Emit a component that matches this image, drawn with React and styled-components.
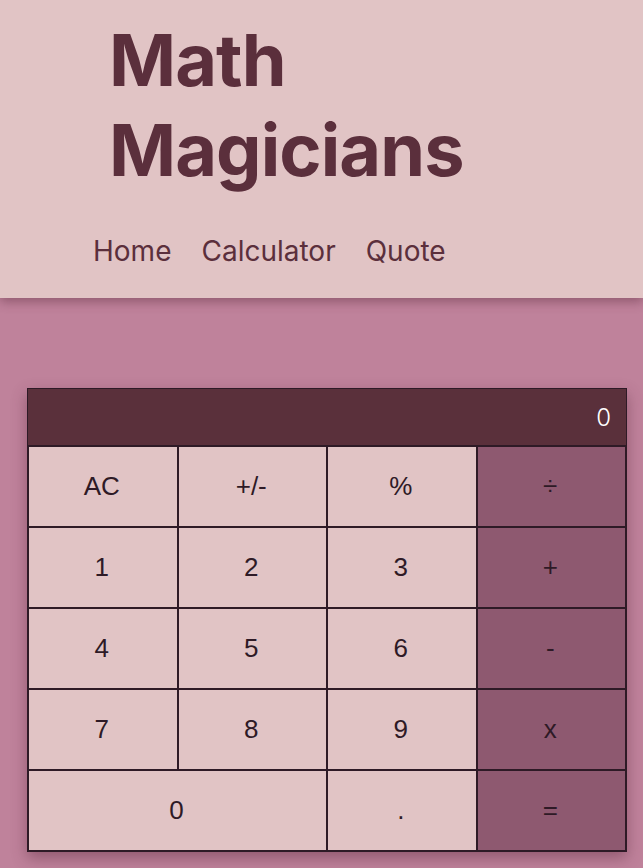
import React from 'react';
import styled, { createGlobalStyle } from 'styled-components';

const Global = createGlobalStyle`
  html, body { margin: 0; padding: 0; background: #bf829b; }
  body { font-family: Inter, "Noto Sans", sans-serif; }
  * { box-sizing: border-box; }
`;

const Page = styled.div`
  display: flex;
  flex-direction: column;
  min-height: 868px;
`;

const Header = styled.header`
  background: #e1c4c5;
  height: 298px;
  padding: 15px 0 0 93px;
  box-shadow: 0 4px 10px rgba(90, 40, 60, 0.45);
  position: relative;
  z-index: 1;
`;

const Title = styled.h1`
  margin: 0 0 0 16px;
  font-family: Inter, sans-serif;
  font-weight: 700;
  font-size: 72px;
  line-height: 90px;
  color: #5b2f3c;
  letter-spacing: -0.9px;
`;

const Nav = styled.nav`
  display: flex;
  gap: 30px;
  margin-top: 39px;
`;

const NavLink = styled.a`
  font-family: Inter, sans-serif;
  font-size: 28px;
  color: #5b2f3c;
  text-decoration: none;
`;

const Main = styled.main`
  padding: 90px 16px 0 27px;
`;

const Calc = styled.div`
  width: 600px;
  display: grid;
  grid-template-columns: repeat(4, 1fr);
  grid-template-rows: 57px repeat(5, 81px);
  box-shadow: 0 6px 14px rgba(90, 40, 60, 0.45);
  border: 1px solid #2e1a26;
`;

const Display = styled.div`
  grid-column: 1 / -1;
  background: #5a303b;
  color: #fff;
  font-family: Inter, sans-serif;
  font-weight: 300;
  font-size: 24px;
  display: flex;
  align-items: center;
  justify-content: flex-end;
  padding-right: 15px;
  border-bottom: 1px solid #2e1a26;
`;

const Key = styled.button`
  grid-column: span ${p => p.span || 1};
  background: ${p => (p.op ? '#8e5970' : '#e1c4c5')};
  border: 1px solid #2e1a26;
  margin: 0;
  font-family: "Liberation Sans", Arial, sans-serif;
  font-size: 26px;
  color: #2e1a26;
  display: flex;
  align-items: center;
  justify-content: center;
  padding: 0 2px 0 0;
  cursor: pointer;
`;

const keys = [
  ['AC'], ['+/-'], ['%'], ['÷', true],
  ['1'], ['2'], ['3'], ['+', true],
  ['4'], ['5'], ['6'], ['-', true],
  ['7'], ['8'], ['9'], ['x', true],
  ['0', false, 2], ['.'], ['=', true],
];

export default function App() {
  return (
    <Page>
      <Global />
      <Header>
        <Title>Math<br />Magicians</Title>
        <Nav>
          <NavLink href="#">Home</NavLink>
          <NavLink href="#">Calculator</NavLink>
          <NavLink href="#">Quote</NavLink>
        </Nav>
      </Header>
      <Main>
        <Calc>
          <Display>0</Display>
          {keys.map(([k, op, span]) => (
            <Key key={k} op={op} span={span}>{k}</Key>
          ))}
        </Calc>
      </Main>
    </Page>
  );
}
